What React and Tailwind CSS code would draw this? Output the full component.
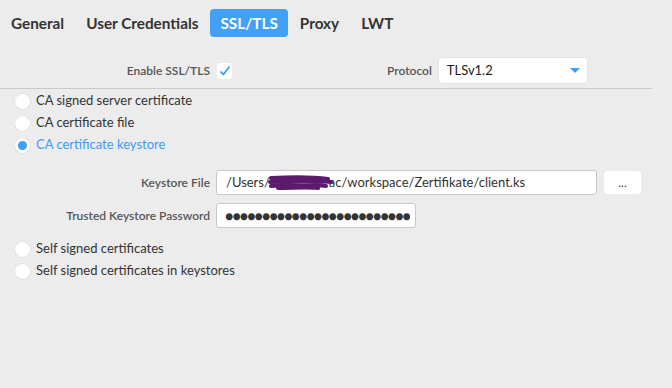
import React from "react";

const tabs = ["General", "User Credentials", "SSL/TLS", "Proxy", "LWT"];

const Radio = ({ label, checked }) => (
  <label className="flex items-center h-[22px] pl-[15px] gap-[6px]">
    <span className="w-[15px] h-[15px] rounded-full bg-white flex items-center justify-center shadow-[0_0_0_0.5px_#d8d8d8]">
      {checked && <span className="w-[9px] h-[9px] rounded-full bg-[#3f9ff5]" />}
    </span>
    <span className={checked ? "text-[13px] text-[#3d9bf2]" : "text-[13px] text-[#333]"}>{label}</span>
  </label>
);

const App = () => {
  return (
    <div
      className="w-[672px] h-[388px] bg-[#ececec] overflow-hidden"
      style={{ fontFamily: "Lato, 'Open Sans', sans-serif" }}
    >
      <div className="flex gap-[2px] pl-[1px] pt-[9px]">
        {tabs.map((t) => (
          <div
            key={t}
            className={
              t === "SSL/TLS"
                ? "h-[28px] px-[10px] flex items-center rounded-[4px] bg-[#42a0f6] text-white text-[15.3px] font-bold"
                : "h-[28px] px-[10px] flex items-center text-[#333] text-[15.3px] font-bold"
            }
          >
            {t}
          </div>
        ))}
      </div>

      <div className="w-[652px] border-b border-[#c9c9c9] h-[52px] pt-[21px] flex items-start">
        <div className="flex items-center h-[25px]">
          <span className="w-[210px] text-right text-[12px] font-semibold text-[#555]">Enable SSL/TLS</span>
          <span className="ml-[7px] w-[15px] h-[16px] rounded-[3px] bg-white flex items-center justify-center">
            <svg width="12" height="12" viewBox="0 0 12 12">
              <path d="M1.5 6.5 L4.5 9.5 L10.5 1.5" fill="none" stroke="#3f9ff5" strokeWidth="1.8" />
            </svg>
          </span>
        </div>
        <div className="flex items-center h-[25px] ml-[155px]">
          <span className="text-[12px] font-semibold text-[#555]">Protocol</span>
          <div className="ml-[7px] w-[148px] h-[25px] bg-white rounded-[4px] flex items-center justify-between pl-[8px] pr-[6px] shadow-[0_0_0_0.5px_#dcdcdc]">
            <span className="text-[13px] text-[#222]">TLSv1.2</span>
            <svg width="12" height="8" viewBox="0 0 12 8">
              <path d="M1 1 L11 1 L6 6 Z" fill="#3f9ff5" />
            </svg>
          </div>
        </div>
      </div>

      <div className="pt-[1px] flex flex-col">
        <Radio label="CA signed server certificate" />
        <Radio label="CA certificate file" />
        <Radio label="CA certificate keystore" checked />
      </div>

      <div className="mt-[14px] flex flex-col gap-[8px]">
        <div className="flex items-center h-[25px]">
          <span className="w-[210px] text-right text-[12px] font-semibold text-[#555]">Keystore File</span>
          <div className="ml-[6px] w-[381px] h-[25px] bg-white border border-[#c8c8c8] rounded-[3px] flex items-center pl-[9px] text-[13px] text-[#333]">
            <span>/Users/</span>
            <span className="relative inline-block w-[59px] h-[16px]">
              <svg className="absolute left-[-2px] top-[-2px]" width="66" height="20" viewBox="0 0 66 20">
                <path
                  d="M3 5 C20 4 40 3 60 6 M2 9 C20 8 40 7 63 9 M3 13 C22 12 42 11 58 13 M10 15 C24 15 38 14 50 15"
                  fill="none"
                  stroke="#5b1a6e"
                  strokeWidth="4"
                  strokeLinecap="round"
                />
              </svg>
            </span>
            <span>ac/workspace/Zertifikate/client.ks</span>
          </div>
          <div className="ml-[7px] w-[37px] h-[23px] bg-white rounded-[4px] flex items-center justify-center text-[12px] text-[#333]">
            ...
          </div>
        </div>
        <div className="flex items-center h-[25px]">
          <span className="w-[210px] text-right text-[12px] font-semibold text-[#555]">Trusted Keystore Password</span>
          <div className="ml-[6px] w-[200px] h-[25px] bg-white border border-[#c8c8c8] rounded-[3px] flex items-center pl-[8px] pr-[5px]">
            <span className="block w-full whitespace-nowrap overflow-hidden text-[#333] text-[14px] tracking-[-1px]">
              ●●●●●●●●●●●●●●●●●●●●●●●●●●
            </span>
          </div>
        </div>
      </div>

      <div className="mt-[10px] flex flex-col">
        <Radio label="Self signed certificates" />
        <Radio label="Self signed certificates in keystores" />
      </div>
    </div>
  );
};

export default App;
